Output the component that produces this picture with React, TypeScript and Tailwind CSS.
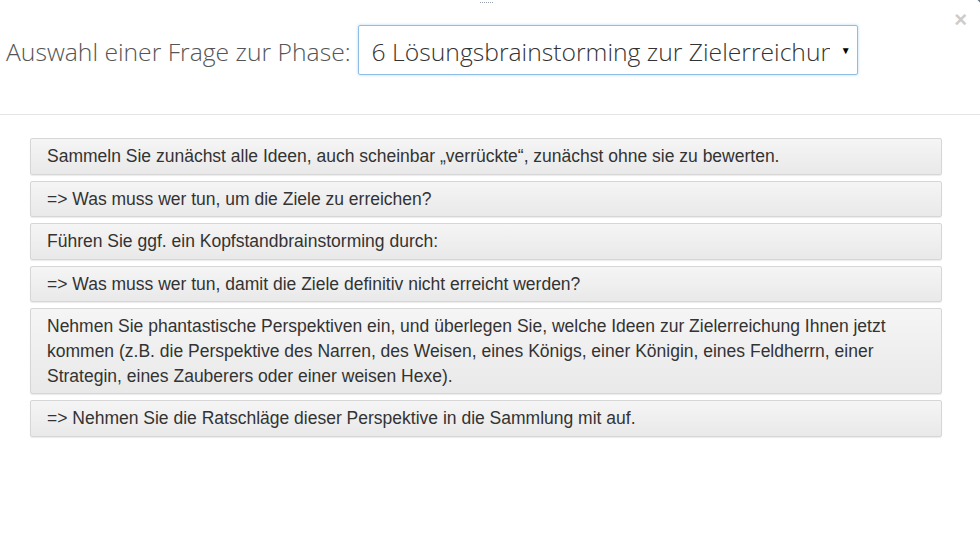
import React from 'react';

const ITEMS: string[] = [
  'Sammeln Sie zunächst alle Ideen, auch scheinbar „verrückte“, zunächst ohne sie zu bewerten.',
  '=> Was muss wer tun, um die Ziele zu erreichen?',
  'Führen Sie ggf. ein Kopfstandbrainstorming durch:',
  '=> Was muss wer tun, damit die Ziele definitiv nicht erreicht werden?',
  'Nehmen Sie phantastische Perspektiven ein, und überlegen Sie, welche Ideen zur Zielerreichung Ihnen jetzt kommen (z.B. die Perspektive des Narren, des Weisen, eines Königs, einer Königin, eines Feldherrn, einer Strategin, eines Zauberers oder einer weisen Hexe).',
  '=> Nehmen Sie die Ratschläge dieser Perspektive in die Sammlung mit auf.',
];

export default function App() {
  return (
    <div className="w-[980px] h-[541px] bg-white overflow-hidden relative font-['Liberation_Sans',Arial,sans-serif]">
      {/* drag handle + resize corner */}
      <div className="absolute left-[480px] top-[2px] w-[13px] h-[2px] border-t border-dotted border-gray-400" />
      <div className="absolute right-[-3px] top-[-2px] w-[10px] h-[2px] bg-gray-500 rotate-45" />

      {/* Modal header */}
      <div className="h-[115px] border-b border-[#e5e5e5] flex items-start relative">
        <div className="flex items-center pl-[6px] pt-[25px]">
          <span className="text-[24.7px] font-light text-[#555] font-['Open_Sans',sans-serif] mr-[7px] pt-[3px]">
            Auswahl einer Frage zur Phase:
          </span>
          <div className="w-[500px] h-[50px] border border-[#8fbde6] rounded-[2px] shadow-[0_0_3px_rgba(102,175,233,0.5)] flex items-center pl-[13px] pr-[6px]">
            <span className="flex-1 text-[24.7px] font-light text-[#333] whitespace-nowrap overflow-hidden font-['Open_Sans',sans-serif] pt-[3px]">
              6 Lösungsbrainstorming zur Zielerreichung
            </span>
            <span className="text-[10px] text-black ml-[11px]">▼</span>
          </div>
        </div>
        <button className="absolute right-[13px] top-[9px] text-[22px] font-bold text-[#ccc] leading-none">×</button>
      </div>

      {/* Modal body */}
      <div className="pt-[23px] pl-[30px] pr-[38px] flex flex-col gap-[6px]">
        {ITEMS.map((t, i) => (
          <div
            key={i}
            className="border border-[#d6d6d6] rounded-[2px] bg-gradient-to-b from-[#f5f5f5] to-[#e9e9e9] shadow-[0_1px_1px_rgba(0,0,0,0.08)] px-[16px] py-[5px] text-[17.5px] leading-[24.6px] text-[#333]"
          >
            {t}
          </div>
        ))}
      </div>
    </div>
  );
}
